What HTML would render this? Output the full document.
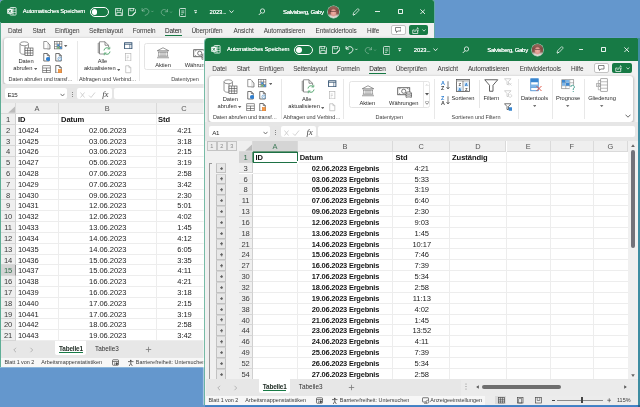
<!DOCTYPE html>
<html lang="de"><head><meta charset="utf-8"><title>Excel</title>
<style>
*{box-sizing:border-box;margin:0;padding:0}
html,body{width:640px;height:407px;overflow:hidden;background:#6497cd;}
body{position:relative;font-family:"Liberation Sans",sans-serif;color:#333;}
.win{will-change:transform;position:absolute;width:434px;height:366.5px;background:#f1f1f1;overflow:hidden;border-radius:4px 4px 0 0;box-shadow:-1px 0 0 0 rgba(95,175,150,.85),-2px 0 1px 0 rgba(255,255,255,.5),2.500px 0 0 0 #3f8da2,0 3px 0 0 #3f7fc4,2.500px 3px 0 0 #2c5f8c;}
.abs{position:absolute}
.title{position:absolute;left:0;top:0;width:100%;height:22.5px;background:#177a45;color:#fff;}
.t{position:absolute;white-space:nowrap;line-height:1;}
.tt{font-size:6.2px;color:#fff;text-shadow:0 0 .25px rgba(255,255,255,.9);}
.tab{font-size:6.45px;letter-spacing:-.12px;color:#383838;top:27.7px;}
.rib{position:absolute;left:3.6px;top:38.2px;width:426.8px;height:45.6px;background:#fff;border-radius:3px;box-shadow:0 1px 2.5px .5px rgba(0,0,0,.2);}
.rl{font-size:5.75px;letter-spacing:-.05px;color:#2c2c2c;text-align:center;}
.gl{font-size:5.5px;color:#3a3a3a;}
.fb{position:absolute;top:88.2px;height:11.2px;background:#fff;border-radius:2px;}
.grid{position:absolute;background:#fff;}
.ch{position:absolute;height:11px;background:#efefef;font-size:7.4px;color:#555;text-align:center;line-height:11.6px;border-right:1px solid #dadada;border-bottom:1px solid #dadada;}
.rh{position:absolute;background:#efefef;font-size:7.6px;letter-spacing:-.2px;color:#3a3a3a;text-align:center;line-height:11.6px;height:10.81px;border-bottom:1px solid #d6d6d6;border-right:1px solid #d0d0d0;}
.c{position:absolute;font-size:7.55px;letter-spacing:-.04px;color:#1c1c1c;line-height:12.3px;height:10.81px;white-space:nowrap;}
.cc{text-align:center}
.b{font-weight:bold;color:#151515}
.hl{position:absolute;height:1px;background:#ededed;}
.vl{position:absolute;width:1px;background:#ededed;}
.pb{width:9.6px;background:#e7e7e7;border:1px solid #c2c2c2;border-top-color:#d4d4d4}
.pb svg{position:absolute;left:2.300px;top:2.900px}
.bb{font-size:7.45px;letter-spacing:-.2px}
.st{font-size:5.45px;color:#3a3a3a;top:359.6px;}
.sheet{font-size:6.4px;color:#333;top:346.3px}
</style></head><body>
<div class="win" id="w1" style="left:0;top:0;border-radius:4px 2px 0 0;box-shadow:0 1px 0 0 rgba(150,190,220,.8),1px 0 0 0 rgba(95,175,150,.7)">
<div class="title"><svg class="abs" style="left:7.2px;top:7.3px" width="9.6" height="8.6" viewBox="0 0 19 17"><rect x="6" y="1" width="12" height="15" rx="1.500" fill="none" stroke="#fff" stroke-width="1.500"/><path d="M6 6h12M6 11h12M12 1v15" stroke="#fff" stroke-width="1.200"/><rect x=".500" y="3.500" width="10.500" height="10" rx="1.200" fill="#fff"/><path d="M3.300 5.800l4.800 5.600M8.100 5.800l-4.800 5.600" stroke="#177a45" stroke-width="1.600"/></svg><div class="t tt" style="left:22.8px;top:9.1px;font-size:5.850px;letter-spacing:-.17px">Automatisches Speichern</div><div class="abs" style="left:89.5px;top:7px;width:19.500px;height:9.5px;border:1px solid #fff;border-radius:5px"></div><div class="abs" style="left:91.8px;top:9px;width:5.500px;height:5.500px;border-radius:3px;background:#fff"></div><svg class="abs" style="left:114.5px;top:7.8px" width="8" height="8" viewBox="0 0 16 16"><path d="M1 1h11.500l2.500 2.500v11.500h-14z" fill="none" stroke="#fff" stroke-width="1.400"/><path d="M4 1v4.500h7v-4.500M3.500 15v-6h9v6" fill="none" stroke="#fff" stroke-width="1.300"/></svg><svg class="abs" style="left:128px;top:7.8px" width="8.5" height="8" viewBox="0 0 17 16"><path d="M8 15h-7v-14h11.500l2.500 2.500v4" fill="none" stroke="#fff" stroke-width="1.400"/><path d="M4 1v4.500h7v-4.500" fill="none" stroke="#fff" stroke-width="1.300"/><path d="M14.500 7l-6 6.500-1 2.500 2.600-.800 6-6.500z" fill="#fff"/></svg><svg class="abs" style="left:141.2px;top:6.9px" width="13" height="9.2" viewBox="0 0 24 17"><path d="M2 2v5.500h5.500" fill="none" stroke="rgba(255,255,255,.38)" stroke-width="1.700"/><path d="M2.500 7.300c2-3.500 5-4.800 8-4 3.500 1 5 4.500 3.500 7.500-1 2.200-3.500 3.700-7 5" fill="none" stroke="rgba(255,255,255,.38)" stroke-width="1.700"/><path d="M19 7l2 2.300 2-2.300" fill="none" stroke="rgba(255,255,255,.38)" stroke-width="1.200"/></svg><svg class="abs" style="left:160px;top:7.5px" width="13" height="8.5" viewBox="0 0 26 17"><path d="M15 2v5.500h-5.500" fill="none" stroke="rgba(255,255,255,.38)" stroke-width="1.700"/><path d="M14.500 7.300c-2-3.500-5-4.800-8-4-3.500 1-5 4.500-3.500 7.500 1 2.200 3.500 3.700 7 5" fill="none" stroke="rgba(255,255,255,.38)" stroke-width="1.700"/><path d="M20 7l2 2.300 2-2.300" fill="none" stroke="rgba(255,255,255,.38)" stroke-width="1.200"/></svg><svg class="abs" style="left:178.5px;top:7.5px" width="7.5" height="9" viewBox="0 0 15 18"><rect x="1" y="1" width="13" height="16" rx="2" fill="none" stroke="#fff" stroke-width="1.500"/><path d="M4.500 6h6M4.500 9.500h6M4.500 13h3" stroke="#fff" stroke-width="1.300"/></svg><svg class="abs" style="left:194px;top:10.2px" width="3.4" height="3.8" viewBox="0 0 8 9"><path d="M0 1h8" stroke="#fff" stroke-width="1.700"/><path d="M.500 4h7l-3.500 4.500z" fill="#fff"/></svg><div class="t tt" style="left:209.6px;top:9.6px;font-size:5.900px;letter-spacing:-.1px">2023<span style="letter-spacing:-.45px">...</span></div><svg class="abs" style="left:229.2px;top:10.3px" width="5" height="3.5" viewBox="0 0 10 7"><path d="M1 1l4 4.500 4-4.500" fill="none" stroke="#fff" stroke-width="1.700"/></svg><svg class="abs" style="left:257.5px;top:8.2px" width="7.5" height="7.5" viewBox="0 0 15 15"><circle cx="9" cy="6" r="4.300" fill="none" stroke="#fff" stroke-width="1.500"/><path d="M6 9.500l-4.500 4.500" stroke="#fff" stroke-width="1.700"/></svg><div class="t tt" style="left:283px;top:9.2px;font-size:6.100px;letter-spacing:-.36px;text-shadow:0 0 .2px #fff">Salvisberg, Gaby</div><div class="abs" style="left:327.6px;top:6.300px;width:11.400px;height:11.400px;border-radius:6px;overflow:hidden;background:radial-gradient(ellipse 30% 36% at 50% 56%,#eeb0a6 0,#e09a90 65%,rgba(224,154,144,0) 100%),linear-gradient(#9a6a5c 0,#7f4a42 40%,#8a564c 62%,#d9d2cc 84%,#e6e2de 100%);box-shadow:0 0 0 .600px rgba(235,240,235,.85)"><div class="abs" style="left:2.800px;top:4.700px;width:5.800px;height:1px;background:rgba(70,40,40,.55)"></div></div><svg class="abs" style="left:351.8px;top:8px" width="8" height="8" viewBox="0 0 16 16"><path d="M11 1.500c1.500-.500 3.500 1.500 3 3l-7.500 8-4.500 1.500 1.200-4.500z" fill="none" stroke="#fff" stroke-width="1.400" stroke-linejoin="round"/><path d="M3 15l3-3" stroke="#fff" stroke-width="1.200"/></svg><div class="abs" style="left:375.3px;top:11.4px;width:4.400px;height:.8px;background:rgba(255,255,255,.85)"></div><div class="abs" style="left:397.6px;top:9.2px;width:5.200px;height:5.200px;border:.6px solid rgba(255,255,255,.9);border-radius:.8px"></div><svg class="abs" style="left:420.1px;top:9.2px" width="5.400" height="5.400" viewBox="0 0 6 6"><path d="M.400 .400l5.200 5.200M5.600 .400L.400 5.600" stroke="#fff" stroke-width=".95"/></svg></div>
<div class="abs" style="left:0;top:22px;width:1.200px;height:345px;background:#5fae96;z-index:5"></div>
<div class="t tab" style="left:8px">Datei</div><div class="t tab" style="left:32.5px">Start</div><div class="t tab" style="left:55px">Einfügen</div><div class="t tab" style="left:89px">Seitenlayout</div><div class="t tab" style="left:132.8px">Formeln</div><div class="t tab" style="left:165px;color:#1a1a1a">Daten</div><div class="t tab" style="left:191.5px">Überprüfen</div><div class="t tab" style="left:233.4px">Ansicht</div><div class="t tab" style="left:263.7px">Automatisieren</div><div class="t tab" style="left:315.5px">Entwicklertools</div><div class="t tab" style="left:366.9px">Hilfe</div><div class="abs" style="left:165px;top:34.700px;width:17px;height:1.3px;background:#177a45"></div><div class="abs" style="left:390.5px;top:25px;width:15.200px;height:10.300px;background:#fff;border:.8px solid #c4c4c4;border-radius:2px"></div><svg class="abs" style="left:394.9px;top:27.3px" width="6.500" height="6" viewBox="0 0 13 12"><path d="M1 1h11v7h-6.500l-2.500 3v-3h-2z" fill="none" stroke="#444" stroke-width="1.300" stroke-linejoin="round"/></svg><div class="abs" style="left:408.5px;top:25px;width:19.800px;height:10.300px;background:#177a45;border-radius:2px"></div><svg class="abs" style="left:411.5px;top:26.8px" width="7" height="7" viewBox="0 0 14 14"><path d="M5 6h-3.500v7h10v-5" fill="none" stroke="#fff" stroke-width="1.400"/><path d="M5.500 9.500c.500-3.500 2.500-5.500 5.500-5.500v-3l3 4-3 4v-2.800c-2.500 0-4 1-5.500 3.300z" fill="none" stroke="#fff" stroke-width="1.100" stroke-linejoin="round"/></svg><svg class="abs" style="left:422.2px;top:29.3px" width="4" height="2.800" viewBox="0 0 8 5.600"><path d="M1 1l3 3.300 3-3.300" fill="none" stroke="#fff" stroke-width="1.400"/></svg>
<div class="rib"></div>
<div class="abs" style="left:0px;top:0;width:0;height:0"><svg class="abs" style="left:19px;top:41px" width="15" height="15.5" viewBox="0 0 30 31"><path d="M2 5.5v17c0 2.5 4 4.2 8.5 4.2h1.500V5.500" fill="#fff" stroke="#585858" stroke-width="1.25"/><path d="M19 5.5v8" stroke="#585858" stroke-width="1.25"/><ellipse cx="10.500" cy="5.500" rx="8.500" ry="4" fill="#fff" stroke="#585858" stroke-width="1.25"/><rect x="12" y="14" width="16" height="15" fill="#fff" stroke="#505050" stroke-width="1.35"/><path d="M12 19h16M12 24h16M17.3 14v15M22.600 14v15" stroke="#505050" stroke-width="1.3"/></svg><div class="t rl" style="left:-14px;width:80px;top:58.8px;">Daten</div><div class="t rl" style="left:-17.2px;width:80px;top:65.9px;">abrufen</div><svg class="abs" style="left:34.099999999999994px;top:68.1px" width="3.400" height="2.200" viewBox="0 0 3.400 2.200"><path d="M0 0h3.400L1.700 2.200z" fill="#666"/></svg><svg class="abs" style="left:42.5px;top:41px" width="8" height="8.5" viewBox="0 0 16 17"><path d="M1.500 1h6l3 3v11.500h-9z" fill="#fff" stroke="#585858" stroke-width="1.2"/><path d="M10 4.500l4 3.500v8h-5" fill="#e8e8e8" stroke="#585858" stroke-width="1.3"/></svg><svg class="abs" style="left:42.5px;top:53px" width="7" height="8.5" viewBox="0 0 14 17"><path d="M1.5 1h7l4 4v11h-11z" fill="#fff" stroke="#4a4a4a" stroke-width="1.5"/><path d="M8.5 1v4h4" fill="none" stroke="#4a4a4a" stroke-width="1.3"/><circle cx="10" cy="12" r="4.200" fill="#2f7fd0"/></svg><svg class="abs" style="left:42px;top:64.5px" width="9" height="8.5" viewBox="0 0 18 17"><rect x="1.500" y="1.500" width="15" height="14" fill="#fff" stroke="#555" stroke-width="1.250"/><path d="M1.500 6h15M9 6v9.500M1.500 11h15" stroke="#555" stroke-width="1.300"/></svg><svg class="abs" style="left:54px;top:41px" width="8.5" height="8.5" viewBox="0 0 17 17"><rect x="1.200" y="1.200" width="14.600" height="14.600" fill="#fff" stroke="#555" stroke-width="1.250"/><path d="M1.200 6h14.600M1.200 11h14.600M6 1.200v14.600M11 1.200v14.600" stroke="#555" stroke-width="1.100"/><rect x="6.500" y="6.500" width="4" height="4" fill="#3a86d0"/><rect x="11.5" y="11.500" width="4" height="4" fill="#3a86d0"/><rect x="6.500" y="11.500" width="4" height="4" fill="#6db36d"/></svg><svg class="abs" style="left:64.3px;top:44.5px" width="3.400" height="2.200" viewBox="0 0 3.400 2.200"><path d="M0 0h3.400L1.700 2.200z" fill="#666"/></svg><svg class="abs" style="left:54.5px;top:53px" width="7" height="8.5" viewBox="0 0 14 17"><path d="M1.5 1h7l4 4v11h-11z" fill="#fff" stroke="#4a4a4a" stroke-width="1.5"/><path d="M8.5 1v4h4" fill="none" stroke="#4a4a4a" stroke-width="1.3"/><circle cx="9.500" cy="11.500" r="3.600" fill="#fff" stroke="#4a8ac0" stroke-width="1.300"/><path d="M9.500 9.500v2.200h1.800" stroke="#4a8ac0" stroke-width="1" fill="none"/></svg><svg class="abs" style="left:54.5px;top:64.5px" width="7" height="8.5" viewBox="0 0 14 17"><path d="M1.5 1h7l4 4v11h-11z" fill="#fff" stroke="#4a4a4a" stroke-width="1.5"/><path d="M8.5 1v4h4" fill="none" stroke="#4a4a4a" stroke-width="1.3"/><rect x="6.500" y="9" width="6.500" height="7" fill="#f2994a" stroke="#e07a20" stroke-width="1"/></svg><div class="t gl" style="left:8.6px;top:77.1px;letter-spacing:-.09px">Daten abrufen und transf…</div><div class="abs" style="left:76.5px;top:41px;width:1px;height:40px;background:#e8e8e8"></div><svg class="abs" style="left:96.5px;top:41px" width="14.5" height="15" viewBox="0 0 29 30"><path d="M2 4h3v20h-3z" fill="#bbb" stroke="#8a8a8a" stroke-width="1"/><path d="M5 1.500h11l7 7v17.500h-18z" fill="#fff" stroke="#585858" stroke-width="1.250"/><path d="M16 1.500v7h7" fill="none" stroke="#585858" stroke-width="1.300"/><circle cx="20" cy="20" r="7.500" fill="#fff"/><path d="M14 19a6 6 0 0 1 10.500-3.500M26 21a6 6 0 0 1-10.500 3.500" fill="none" stroke="#4ca56a" stroke-width="1.800"/><path d="M25.500 11.500v4.500h-4.500M14.500 28.500v-4.500h4.500" fill="none" stroke="#4ca56a" stroke-width="1.600"/></svg><div class="t rl" style="left:62.5px;width:80px;top:59.1px;">Alle</div><div class="t rl" style="left:59.8px;width:80px;top:66.4px;">aktualisieren</div><svg class="abs" style="left:116.6px;top:68.6px" width="3.400" height="2.200" viewBox="0 0 3.400 2.200"><path d="M0 0h3.400L1.700 2.200z" fill="#666"/></svg><svg class="abs" style="left:124px;top:41.5px" width="8.5" height="7.5" viewBox="0 0 17 15"><rect x="1.200" y="1.500" width="14.600" height="12" fill="#fff" stroke="#2f4f6f" stroke-width="1.800"/><path d="M1.200 4.500h14.600" stroke="#2f4f6f" stroke-width="1.600"/><path d="M11.500 4.500v9" stroke="#2f4f6f" stroke-width="1.200"/></svg><svg class="abs" style="left:125px;top:52.5px" width="6.5" height="8.5" viewBox="0 0 13 17"><rect x="1.200" y="1.200" width="10.600" height="14.600" fill="#fff" stroke="#b0b0b0" stroke-width="1.250"/><path d="M3.500 6h4M3.500 9h4M3.500 12h2" stroke="#b8b8b8" stroke-width="1.200"/></svg><svg class="abs" style="left:125px;top:65px" width="6.5" height="8.5" viewBox="0 0 14 17"><path d="M1.5 1h7l4 4v11h-11z" fill="#fff" stroke="#b4b4b4" stroke-width="1.5"/><path d="M8.5 1v4h4" fill="none" stroke="#b4b4b4" stroke-width="1.3"/></svg><div class="t gl" style="left:79px;top:77.1px;letter-spacing:-.06px">Abfragen und Verbind…</div><div class="abs" style="left:138.7px;top:41px;width:1px;height:40px;background:#e8e8e8"></div></div><div class="abs" style="left:0.7px;top:0;width:0;height:0"><div class="abs" style="left:143.500px;top:42.500px;width:100px;height:27.500px;border:1px solid #e4e4e4;border-radius:2.500px;background:#fff"></div><svg class="abs" style="left:155.5px;top:47px" width="14" height="11.5" viewBox="0 0 28 23"><path d="M14 1.500L2.500 7.500h23z" fill="#fff" stroke="#505050" stroke-width="1.150" stroke-linejoin="round"/><path d="M5.500 10v8M10 10v8M14 10v8M18 10v8M22.500 10v8" stroke="#505050" stroke-width="1.150"/><path d="M3.500 18.500h21M2 21.500h24M4 10h20" stroke="#505050" stroke-width="1.150"/></svg><div class="t rl" style="left:122.30000000000001px;width:80px;top:62.7px;">Aktien</div><svg class="abs" style="left:192px;top:48.5px" width="15" height="11.5" viewBox="0 0 30 23"><rect x="1.500" y="1.500" width="24" height="14" fill="#fff" stroke="#444" stroke-width="1.600"/><circle cx="13.500" cy="8.500" r="4.200" fill="#fff" stroke="#444" stroke-width="1.400"/><path d="M4 4.500a3 3 0 0 0 2.500-2.500M4 12.500a3 3 0 0 1 2.500 2.500M23 4.500a3 3 0 0 1-2.500-2.500" fill="none" stroke="#444" stroke-width="1"/><path d="M18 12v8c0 1.500 2.500 2.500 5.500 2.500s5.500-1 5.500-2.500v-8" fill="#e6e6e6" stroke="#444" stroke-width="1.300"/><ellipse cx="23.500" cy="12" rx="5.500" ry="2.300" fill="#f4f4f4" stroke="#444" stroke-width="1.300"/><path d="M18 16c0 1.500 2.500 2.300 5.500 2.300s5.500-.800 5.500-2.300" fill="none" stroke="#444" stroke-width="1.100"/></svg><div class="t rl" style="left:158.7px;width:80px;top:62.7px;">Währungen</div><div class="t rl" style="left:144.3px;width:80px;top:77.1px;font-size:5.500px;color:#444">Datentypen</div></div>
<div class="abs" style="left:0;top:83.8px;width:100%;height:19.5px;background:#e6e6e6"></div><div class="fb" style="left:4.6px;width:62px"></div>
<div class="t" style="left:7.6px;top:91.6px;font-size:6.2px;letter-spacing:-.42px;color:#2a2a2a">E15</div>
<svg class="abs" style="left:59.599999999999994px;top:92.5px" width="5" height="4" viewBox="0 0 5 4"><path d="M0.5 0.8L2.5 3 4.5 0.8" fill="none" stroke="#555" stroke-width=".8"/></svg>
<div class="abs" style="left:71.6px;top:91.5px;width:1px;height:5px;border-left:1px dotted #888"></div>
<div class="fb" style="left:76.6px;width:35px"></div>
<svg class="abs" style="left:78.6px;top:90.5px" width="30" height="8" viewBox="0 0 30 8"><path d="M1.5 1.5l4 5M5.5 1.5l-4 5" stroke="#c8c8c8" stroke-width=".8" fill="none"/><path d="M10 4.5l2 2 4-5" stroke="#c8c8c8" stroke-width=".8" fill="none"/></svg>
<div class="t" style="left:102.19999999999999px;top:89.6px;font-size:9px;font-family:'Liberation Serif',serif;font-style:italic;color:#444;letter-spacing:-.3px">fx</div>
<div class="fb" style="left:114px;width:317px"></div>
<div class="grid" style="left:1px;top:103px;width:433px;height:238px"></div><div class="ch" style="left:1px;top:103px;width:15px;height:11px"></div><svg class="abs" style="left:7.699999999999999px;top:105.8px" width="7.5" height="7" viewBox="0 0 7.5 7"><path d="M7.2 0.3v6.400h-7z" fill="#bcbcbc"/></svg><div class="ch" style="left:16px;top:103px;width:43px">A</div><div class="vl" style="left:58px;top:114px;height:227px"></div><div class="ch" style="left:59px;top:103px;width:97.5px">B</div><div class="vl" style="left:155.5px;top:114px;height:227px"></div><div class="ch" style="left:156.5px;top:103px;width:56.0px">C</div><div class="vl" style="left:211.5px;top:114px;height:227px"></div><div class="ch" style="left:212.5px;top:103px;width:56.5px">D</div><div class="vl" style="left:268px;top:114px;height:227px"></div><div class="rh" style="left:1px;top:114.00px;width:15px">1</div><div class="hl" style="left:16px;top:123.81px;width:418px"></div><div class="c b" style="left:18px;top:114.00px">ID</div><div class="c b" style="left:61px;top:114.00px">Datum</div><div class="c b" style="left:158px;top:114.00px">Std</div><div class="rh" style="left:1px;top:124.81px;width:15px">2</div><div class="hl" style="left:16px;top:134.62px;width:418px"></div><div class="c" style="left:17.9px;top:124.81px">10424</div><div class="c cc" style="left:59px;width:97.5px;top:124.81px">02.06.2023</div><div class="c cc" style="left:156.5px;width:56px;top:124.81px">4:21</div><div class="rh" style="left:1px;top:135.62px;width:15px">3</div><div class="hl" style="left:16px;top:145.43px;width:418px"></div><div class="c" style="left:17.9px;top:135.62px">10425</div><div class="c cc" style="left:59px;width:97.5px;top:135.62px">03.06.2023</div><div class="c cc" style="left:156.5px;width:56px;top:135.62px">3:18</div><div class="rh" style="left:1px;top:146.43px;width:15px">4</div><div class="hl" style="left:16px;top:156.24px;width:418px"></div><div class="c" style="left:17.9px;top:146.43px">10426</div><div class="c cc" style="left:59px;width:97.5px;top:146.43px">03.06.2023</div><div class="c cc" style="left:156.5px;width:56px;top:146.43px">2:15</div><div class="rh" style="left:1px;top:157.24px;width:15px">5</div><div class="hl" style="left:16px;top:167.05px;width:418px"></div><div class="c" style="left:17.9px;top:157.24px">10427</div><div class="c cc" style="left:59px;width:97.5px;top:157.24px">05.06.2023</div><div class="c cc" style="left:156.5px;width:56px;top:157.24px">3:19</div><div class="rh" style="left:1px;top:168.05px;width:15px">6</div><div class="hl" style="left:16px;top:177.86px;width:418px"></div><div class="c" style="left:17.9px;top:168.05px">10428</div><div class="c cc" style="left:59px;width:97.5px;top:168.05px">07.06.2023</div><div class="c cc" style="left:156.5px;width:56px;top:168.05px">2:58</div><div class="rh" style="left:1px;top:178.86px;width:15px">7</div><div class="hl" style="left:16px;top:188.67px;width:418px"></div><div class="c" style="left:17.9px;top:178.86px">10429</div><div class="c cc" style="left:59px;width:97.5px;top:178.86px">07.06.2023</div><div class="c cc" style="left:156.5px;width:56px;top:178.86px">3:42</div><div class="rh" style="left:1px;top:189.67px;width:15px">8</div><div class="hl" style="left:16px;top:199.48px;width:418px"></div><div class="c" style="left:17.9px;top:189.67px">10430</div><div class="c cc" style="left:59px;width:97.5px;top:189.67px">09.06.2023</div><div class="c cc" style="left:156.5px;width:56px;top:189.67px">2:30</div><div class="rh" style="left:1px;top:200.48px;width:15px">9</div><div class="hl" style="left:16px;top:210.29px;width:418px"></div><div class="c" style="left:17.9px;top:200.48px">10431</div><div class="c cc" style="left:59px;width:97.5px;top:200.48px">12.06.2023</div><div class="c cc" style="left:156.5px;width:56px;top:200.48px">5:01</div><div class="rh" style="left:1px;top:211.29px;width:15px">10</div><div class="hl" style="left:16px;top:221.10px;width:418px"></div><div class="c" style="left:17.9px;top:211.29px">10432</div><div class="c cc" style="left:59px;width:97.5px;top:211.29px">12.06.2023</div><div class="c cc" style="left:156.5px;width:56px;top:211.29px">4:02</div><div class="rh" style="left:1px;top:222.10px;width:15px">11</div><div class="hl" style="left:16px;top:231.91px;width:418px"></div><div class="c" style="left:17.9px;top:222.10px">10433</div><div class="c cc" style="left:59px;width:97.5px;top:222.10px">13.06.2023</div><div class="c cc" style="left:156.5px;width:56px;top:222.10px">1:45</div><div class="rh" style="left:1px;top:232.91px;width:15px">12</div><div class="hl" style="left:16px;top:242.72px;width:418px"></div><div class="c" style="left:17.9px;top:232.91px">10434</div><div class="c cc" style="left:59px;width:97.5px;top:232.91px">14.06.2023</div><div class="c cc" style="left:156.5px;width:56px;top:232.91px">4:12</div><div class="rh" style="left:1px;top:243.72px;width:15px">13</div><div class="hl" style="left:16px;top:253.53px;width:418px"></div><div class="c" style="left:17.9px;top:243.72px">10435</div><div class="c cc" style="left:59px;width:97.5px;top:243.72px">14.06.2023</div><div class="c cc" style="left:156.5px;width:56px;top:243.72px">6:05</div><div class="rh" style="left:1px;top:254.53px;width:15px">14</div><div class="hl" style="left:16px;top:264.34px;width:418px"></div><div class="c" style="left:17.9px;top:254.53px">10436</div><div class="c cc" style="left:59px;width:97.5px;top:254.53px">15.06.2023</div><div class="c cc" style="left:156.5px;width:56px;top:254.53px">3:35</div><div class="rh" style="left:1px;top:265.34px;width:15px;background:#d4d4d4;color:#2f6d4a;border-right:1.2px solid #8c8c8c">15</div><div class="hl" style="left:16px;top:275.15px;width:418px"></div><div class="c" style="left:17.9px;top:265.34px">10437</div><div class="c cc" style="left:59px;width:97.5px;top:265.34px">15.06.2023</div><div class="c cc" style="left:156.5px;width:56px;top:265.34px">4:11</div><div class="rh" style="left:1px;top:276.15px;width:15px">16</div><div class="hl" style="left:16px;top:285.96px;width:418px"></div><div class="c" style="left:17.9px;top:276.15px">10438</div><div class="c cc" style="left:59px;width:97.5px;top:276.15px">16.06.2023</div><div class="c cc" style="left:156.5px;width:56px;top:276.15px">4:21</div><div class="rh" style="left:1px;top:286.96px;width:15px">17</div><div class="hl" style="left:16px;top:296.77px;width:418px"></div><div class="c" style="left:17.9px;top:286.96px">10439</div><div class="c cc" style="left:59px;width:97.5px;top:286.96px">16.06.2023</div><div class="c cc" style="left:156.5px;width:56px;top:286.96px">3:18</div><div class="rh" style="left:1px;top:297.77px;width:15px">18</div><div class="hl" style="left:16px;top:307.58px;width:418px"></div><div class="c" style="left:17.9px;top:297.77px">10440</div><div class="c cc" style="left:59px;width:97.5px;top:297.77px">17.06.2023</div><div class="c cc" style="left:156.5px;width:56px;top:297.77px">2:15</div><div class="rh" style="left:1px;top:308.58px;width:15px">19</div><div class="hl" style="left:16px;top:318.39px;width:418px"></div><div class="c" style="left:17.9px;top:308.58px">10441</div><div class="c cc" style="left:59px;width:97.5px;top:308.58px">17.06.2023</div><div class="c cc" style="left:156.5px;width:56px;top:308.58px">3:19</div><div class="rh" style="left:1px;top:319.39px;width:15px">20</div><div class="hl" style="left:16px;top:329.20px;width:418px"></div><div class="c" style="left:17.9px;top:319.39px">10442</div><div class="c cc" style="left:59px;width:97.5px;top:319.39px">18.06.2023</div><div class="c cc" style="left:156.5px;width:56px;top:319.39px">2:58</div><div class="rh" style="left:1px;top:330.20px;width:15px">21</div><div class="hl" style="left:16px;top:340.01px;width:418px"></div><div class="c" style="left:17.9px;top:330.20px">10443</div><div class="c cc" style="left:59px;width:97.5px;top:330.20px">19.06.2023</div><div class="c cc" style="left:156.5px;width:56px;top:330.20px">3:42</div>
<div class="abs" style="left:1px;top:341px;width:433px;height:16.5px;background:#e7e7e7"></div><svg class="abs" style="left:13px;top:346.5px" width="22" height="6" viewBox="0 0 22 6"><path d="M3 .8L.8 3 3 5.2M17.5 .8L19.7 3 17.5 5.2" fill="none" stroke="#a8a8a8" stroke-width=".8"/></svg><div class="abs" style="left:55px;top:341px;width:31px;height:14px;background:#fff;border-radius:0 0 2px 2px"></div><div class="t sheet b" style="left:59px;color:#1d2a22;font-size:6.4px;letter-spacing:-.16px">Tabelle1</div><div class="abs" style="left:59px;top:352.2px;width:23.5px;height:1.1px;background:#177a45"></div><div class="t sheet" style="left:95px">Tabelle3</div><svg class="abs" style="left:144.5px;top:346px" width="7" height="7" viewBox="0 0 7 7"><path d="M3.5 .8v5.400M.8 3.5h5.400" stroke="#7a7a7a" stroke-width=".8"/></svg>
<div class="abs" style="left:1px;top:357.5px;width:433px;height:9px;background:#f7f7f7"></div><div class="t st" style="left:4.5px;letter-spacing:-.04px">Blatt 1 von 2</div><div class="t st" style="left:41.2px">Arbeitsmappenstatistiken</div><svg class="abs" style="left:112px;top:358.8px" width="7" height="7" viewBox="0 0 14 14"><rect x="1" y="1.5" width="12" height="11" rx="1.5" fill="none" stroke="#444" stroke-width="1.4"/><path d="M1 5h12M4 8h2M8 8h2M4 10.5h2" stroke="#444" stroke-width="1.3"/><circle cx="9.5" cy="9.5" r="2.4" fill="#444"/></svg><svg class="abs" style="left:127px;top:358.6px" width="7.5" height="7.5" viewBox="0 0 15 15"><circle cx="7.5" cy="3" r="1.6" fill="#444"/><path d="M2 5.2h11M7.5 5.2v4M7.5 9l-3.2 5M7.5 9l3.2 5" stroke="#444" stroke-width="1.5" fill="none"/></svg><div class="t st" style="left:135.8px">Barrierefreiheit: Untersuchen</div>
</div>
<div class="win" id="w2" style="left:205px;top:37.6px;width:432.8px;border-radius:4px 1px 0 0">
<div class="title"><svg class="abs" style="left:6.4px;top:7.3px" width="9.6" height="8.6" viewBox="0 0 19 17"><rect x="6" y="1" width="12" height="15" rx="1.500" fill="none" stroke="#fff" stroke-width="1.500"/><path d="M6 6h12M6 11h12M12 1v15" stroke="#fff" stroke-width="1.200"/><rect x=".500" y="3.500" width="10.500" height="10" rx="1.200" fill="#fff"/><path d="M3.300 5.800l4.800 5.600M8.100 5.800l-4.800 5.600" stroke="#177a45" stroke-width="1.600"/></svg><div class="t tt" style="left:22.0px;top:9.1px;font-size:5.850px;letter-spacing:-.17px">Automatisches Speichern</div><div class="abs" style="left:88.7px;top:7px;width:19.500px;height:9.5px;border:1px solid #fff;border-radius:5px"></div><div class="abs" style="left:91.0px;top:9px;width:5.500px;height:5.500px;border-radius:3px;background:#fff"></div><svg class="abs" style="left:113.7px;top:7.8px" width="8" height="8" viewBox="0 0 16 16"><path d="M1 1h11.500l2.500 2.500v11.500h-14z" fill="none" stroke="#fff" stroke-width="1.400"/><path d="M4 1v4.500h7v-4.500M3.500 15v-6h9v6" fill="none" stroke="#fff" stroke-width="1.300"/></svg><svg class="abs" style="left:127.2px;top:7.8px" width="8.5" height="8" viewBox="0 0 17 16"><path d="M8 15h-7v-14h11.500l2.500 2.500v4" fill="none" stroke="#fff" stroke-width="1.400"/><path d="M4 1v4.500h7v-4.500" fill="none" stroke="#fff" stroke-width="1.300"/><path d="M14.500 7l-6 6.500-1 2.500 2.600-.800 6-6.500z" fill="#fff"/></svg><svg class="abs" style="left:140.39999999999998px;top:6.9px" width="13" height="9.2" viewBox="0 0 24 17"><path d="M2 2v5.500h5.500" fill="none" stroke="#fff" stroke-width="1.700"/><path d="M2.500 7.300c2-3.500 5-4.800 8-4 3.500 1 5 4.500 3.500 7.500-1 2.200-3.500 3.700-7 5" fill="none" stroke="#fff" stroke-width="1.700"/><path d="M19 7l2 2.300 2-2.300" fill="none" stroke="#fff" stroke-width="1.200"/></svg><svg class="abs" style="left:159.2px;top:7.5px" width="13" height="8.5" viewBox="0 0 26 17"><path d="M15 2v5.500h-5.500" fill="none" stroke="rgba(255,255,255,.38)" stroke-width="1.700"/><path d="M14.500 7.300c-2-3.500-5-4.800-8-4-3.500 1-5 4.500-3.500 7.500 1 2.200 3.500 3.700 7 5" fill="none" stroke="rgba(255,255,255,.38)" stroke-width="1.700"/><path d="M20 7l2 2.300 2-2.300" fill="none" stroke="rgba(255,255,255,.38)" stroke-width="1.200"/></svg><svg class="abs" style="left:177.7px;top:7.5px" width="7.5" height="9" viewBox="0 0 15 18"><rect x="1" y="1" width="13" height="16" rx="2" fill="none" stroke="#fff" stroke-width="1.500"/><path d="M4.500 6h6M4.500 9.500h6M4.500 13h3" stroke="#fff" stroke-width="1.300"/></svg><svg class="abs" style="left:193.2px;top:10.2px" width="3.4" height="3.8" viewBox="0 0 8 9"><path d="M0 1h8" stroke="#fff" stroke-width="1.700"/><path d="M.500 4h7l-3.500 4.500z" fill="#fff"/></svg><div class="t tt" style="left:208.79999999999998px;top:9.6px;font-size:5.900px;letter-spacing:-.1px">2023<span style="letter-spacing:-.45px">...</span></div><svg class="abs" style="left:228.39999999999998px;top:10.3px" width="5" height="3.5" viewBox="0 0 10 7"><path d="M1 1l4 4.500 4-4.500" fill="none" stroke="#fff" stroke-width="1.700"/></svg><svg class="abs" style="left:256.7px;top:8.2px" width="7.5" height="7.5" viewBox="0 0 15 15"><circle cx="9" cy="6" r="4.300" fill="none" stroke="#fff" stroke-width="1.500"/><path d="M6 9.500l-4.500 4.500" stroke="#fff" stroke-width="1.700"/></svg><div class="t tt" style="left:282.2px;top:9.2px;font-size:6.100px;letter-spacing:-.36px;text-shadow:0 0 .2px #fff">Salvisberg, Gaby</div><div class="abs" style="left:326.8px;top:6.300px;width:11.400px;height:11.400px;border-radius:6px;overflow:hidden;background:radial-gradient(ellipse 30% 36% at 50% 56%,#eeb0a6 0,#e09a90 65%,rgba(224,154,144,0) 100%),linear-gradient(#9a6a5c 0,#7f4a42 40%,#8a564c 62%,#d9d2cc 84%,#e6e2de 100%);box-shadow:0 0 0 .600px rgba(235,240,235,.85)"><div class="abs" style="left:2.800px;top:4.700px;width:5.800px;height:1px;background:rgba(70,40,40,.55)"></div></div><svg class="abs" style="left:351.0px;top:8px" width="8" height="8" viewBox="0 0 16 16"><path d="M11 1.500c1.500-.500 3.500 1.500 3 3l-7.500 8-4.500 1.500 1.200-4.500z" fill="none" stroke="#fff" stroke-width="1.400" stroke-linejoin="round"/><path d="M3 15l3-3" stroke="#fff" stroke-width="1.200"/></svg><div class="abs" style="left:373.8px;top:11.4px;width:4.400px;height:.8px;background:rgba(255,255,255,.85)"></div><div class="abs" style="left:396.1px;top:9.2px;width:5.200px;height:5.200px;border:.6px solid rgba(255,255,255,.9);border-radius:.8px"></div><svg class="abs" style="left:418.6px;top:9.2px" width="5.400" height="5.400" viewBox="0 0 6 6"><path d="M.400 .400l5.200 5.200M5.600 .400L.400 5.600" stroke="#fff" stroke-width=".95"/></svg></div>
<div class="t tab" style="left:7.2px">Datei</div><div class="t tab" style="left:31.7px">Start</div><div class="t tab" style="left:54.2px">Einfügen</div><div class="t tab" style="left:88.2px">Seitenlayout</div><div class="t tab" style="left:132.0px">Formeln</div><div class="t tab" style="left:164.2px;color:#1a1a1a">Daten</div><div class="t tab" style="left:190.7px">Überprüfen</div><div class="t tab" style="left:232.6px">Ansicht</div><div class="t tab" style="left:262.9px">Automatisieren</div><div class="t tab" style="left:314.7px">Entwicklertools</div><div class="t tab" style="left:366.09999999999997px">Hilfe</div><div class="abs" style="left:164.2px;top:34.700px;width:17px;height:1.3px;background:#177a45"></div><div class="abs" style="left:389.0px;top:25px;width:15.200px;height:10.300px;background:#fff;border:.8px solid #c4c4c4;border-radius:2px"></div><svg class="abs" style="left:393.4px;top:27.3px" width="6.500" height="6" viewBox="0 0 13 12"><path d="M1 1h11v7h-6.500l-2.500 3v-3h-2z" fill="none" stroke="#444" stroke-width="1.300" stroke-linejoin="round"/></svg><div class="abs" style="left:407.0px;top:25px;width:19.800px;height:10.300px;background:#177a45;border-radius:2px"></div><svg class="abs" style="left:410.0px;top:26.8px" width="7" height="7" viewBox="0 0 14 14"><path d="M5 6h-3.500v7h10v-5" fill="none" stroke="#fff" stroke-width="1.400"/><path d="M5.500 9.500c.500-3.500 2.500-5.500 5.500-5.500v-3l3 4-3 4v-2.800c-2.500 0-4 1-5.500 3.300z" fill="none" stroke="#fff" stroke-width="1.100" stroke-linejoin="round"/></svg><svg class="abs" style="left:420.7px;top:29.3px" width="4" height="2.800" viewBox="0 0 8 5.600"><path d="M1 1l3 3.300 3-3.300" fill="none" stroke="#fff" stroke-width="1.400"/></svg>
<div class="rib" style="width:424.8px"></div>
<div class="abs" style="left:-0.7px;top:0;width:0;height:0"><svg class="abs" style="left:19px;top:41px" width="15" height="15.5" viewBox="0 0 30 31"><path d="M2 5.5v17c0 2.5 4 4.2 8.5 4.2h1.500V5.500" fill="#fff" stroke="#585858" stroke-width="1.25"/><path d="M19 5.5v8" stroke="#585858" stroke-width="1.25"/><ellipse cx="10.500" cy="5.500" rx="8.500" ry="4" fill="#fff" stroke="#585858" stroke-width="1.25"/><rect x="12" y="14" width="16" height="15" fill="#fff" stroke="#505050" stroke-width="1.35"/><path d="M12 19h16M12 24h16M17.3 14v15M22.600 14v15" stroke="#505050" stroke-width="1.3"/></svg><div class="t rl" style="left:-14px;width:80px;top:58.8px;">Daten</div><div class="t rl" style="left:-17.2px;width:80px;top:65.9px;">abrufen</div><svg class="abs" style="left:34.099999999999994px;top:68.1px" width="3.400" height="2.200" viewBox="0 0 3.400 2.200"><path d="M0 0h3.400L1.700 2.200z" fill="#666"/></svg><svg class="abs" style="left:42.5px;top:41px" width="8" height="8.5" viewBox="0 0 16 17"><path d="M1.500 1h6l3 3v11.500h-9z" fill="#fff" stroke="#585858" stroke-width="1.2"/><path d="M10 4.500l4 3.500v8h-5" fill="#e8e8e8" stroke="#585858" stroke-width="1.3"/></svg><svg class="abs" style="left:42.5px;top:53px" width="7" height="8.5" viewBox="0 0 14 17"><path d="M1.5 1h7l4 4v11h-11z" fill="#fff" stroke="#4a4a4a" stroke-width="1.5"/><path d="M8.5 1v4h4" fill="none" stroke="#4a4a4a" stroke-width="1.3"/><circle cx="10" cy="12" r="4.200" fill="#2f7fd0"/></svg><svg class="abs" style="left:42px;top:64.5px" width="9" height="8.5" viewBox="0 0 18 17"><rect x="1.500" y="1.500" width="15" height="14" fill="#fff" stroke="#555" stroke-width="1.250"/><path d="M1.500 6h15M9 6v9.500M1.500 11h15" stroke="#555" stroke-width="1.300"/></svg><svg class="abs" style="left:54px;top:41px" width="8.5" height="8.5" viewBox="0 0 17 17"><rect x="1.200" y="1.200" width="14.600" height="14.600" fill="#fff" stroke="#555" stroke-width="1.250"/><path d="M1.200 6h14.600M1.200 11h14.600M6 1.200v14.600M11 1.200v14.600" stroke="#555" stroke-width="1.100"/><rect x="6.500" y="6.500" width="4" height="4" fill="#3a86d0"/><rect x="11.5" y="11.500" width="4" height="4" fill="#3a86d0"/><rect x="6.500" y="11.500" width="4" height="4" fill="#6db36d"/></svg><svg class="abs" style="left:64.3px;top:44.5px" width="3.400" height="2.200" viewBox="0 0 3.400 2.200"><path d="M0 0h3.400L1.700 2.200z" fill="#666"/></svg><svg class="abs" style="left:54.5px;top:53px" width="7" height="8.5" viewBox="0 0 14 17"><path d="M1.5 1h7l4 4v11h-11z" fill="#fff" stroke="#4a4a4a" stroke-width="1.5"/><path d="M8.5 1v4h4" fill="none" stroke="#4a4a4a" stroke-width="1.3"/><circle cx="9.500" cy="11.500" r="3.600" fill="#fff" stroke="#4a8ac0" stroke-width="1.300"/><path d="M9.500 9.500v2.200h1.800" stroke="#4a8ac0" stroke-width="1" fill="none"/></svg><svg class="abs" style="left:54.5px;top:64.5px" width="7" height="8.5" viewBox="0 0 14 17"><path d="M1.5 1h7l4 4v11h-11z" fill="#fff" stroke="#4a4a4a" stroke-width="1.5"/><path d="M8.5 1v4h4" fill="none" stroke="#4a4a4a" stroke-width="1.3"/><rect x="6.500" y="9" width="6.500" height="7" fill="#f2994a" stroke="#e07a20" stroke-width="1"/></svg><div class="t gl" style="left:8.6px;top:77.1px;letter-spacing:-.09px">Daten abrufen und transf…</div><div class="abs" style="left:76.5px;top:41px;width:1px;height:40px;background:#e8e8e8"></div><svg class="abs" style="left:96.5px;top:41px" width="14.5" height="15" viewBox="0 0 29 30"><path d="M2 4h3v20h-3z" fill="#bbb" stroke="#8a8a8a" stroke-width="1"/><path d="M5 1.500h11l7 7v17.500h-18z" fill="#fff" stroke="#585858" stroke-width="1.250"/><path d="M16 1.500v7h7" fill="none" stroke="#585858" stroke-width="1.300"/><circle cx="20" cy="20" r="7.500" fill="#fff"/><path d="M14 19a6 6 0 0 1 10.500-3.500M26 21a6 6 0 0 1-10.500 3.500" fill="none" stroke="#4ca56a" stroke-width="1.800"/><path d="M25.500 11.500v4.500h-4.500M14.500 28.500v-4.500h4.500" fill="none" stroke="#4ca56a" stroke-width="1.600"/></svg><div class="t rl" style="left:62.5px;width:80px;top:59.1px;">Alle</div><div class="t rl" style="left:59.8px;width:80px;top:66.4px;">aktualisieren</div><svg class="abs" style="left:116.6px;top:68.6px" width="3.400" height="2.200" viewBox="0 0 3.400 2.200"><path d="M0 0h3.400L1.700 2.200z" fill="#666"/></svg><svg class="abs" style="left:124px;top:41.5px" width="8.5" height="7.5" viewBox="0 0 17 15"><rect x="1.200" y="1.500" width="14.600" height="12" fill="#fff" stroke="#2f4f6f" stroke-width="1.800"/><path d="M1.200 4.500h14.600" stroke="#2f4f6f" stroke-width="1.600"/><path d="M11.500 4.500v9" stroke="#2f4f6f" stroke-width="1.200"/></svg><svg class="abs" style="left:125px;top:52.5px" width="6.5" height="8.5" viewBox="0 0 13 17"><rect x="1.200" y="1.200" width="10.600" height="14.600" fill="#fff" stroke="#b0b0b0" stroke-width="1.250"/><path d="M3.500 6h4M3.500 9h4M3.500 12h2" stroke="#b8b8b8" stroke-width="1.200"/></svg><svg class="abs" style="left:125px;top:65px" width="6.5" height="8.5" viewBox="0 0 14 17"><path d="M1.5 1h7l4 4v11h-11z" fill="#fff" stroke="#b4b4b4" stroke-width="1.5"/><path d="M8.5 1v4h4" fill="none" stroke="#b4b4b4" stroke-width="1.3"/></svg><div class="t gl" style="left:79px;top:77.1px;letter-spacing:-.06px">Abfragen und Verbind…</div><div class="abs" style="left:138.7px;top:41px;width:1px;height:40px;background:#e8e8e8"></div></div><div class="abs" style="left:0px;top:0;width:0;height:0"><div class="abs" style="left:143.500px;top:42.500px;width:81.5px;height:27.500px;border:1px solid #e4e4e4;border-radius:2.500px;background:#fff"></div><svg class="abs" style="left:155.5px;top:47px" width="14" height="11.5" viewBox="0 0 28 23"><path d="M14 1.500L2.500 7.500h23z" fill="#fff" stroke="#505050" stroke-width="1.150" stroke-linejoin="round"/><path d="M5.500 10v8M10 10v8M14 10v8M18 10v8M22.500 10v8" stroke="#505050" stroke-width="1.150"/><path d="M3.500 18.500h21M2 21.500h24M4 10h20" stroke="#505050" stroke-width="1.150"/></svg><div class="t rl" style="left:122.30000000000001px;width:80px;top:62.7px;">Aktien</div><svg class="abs" style="left:192px;top:48.5px" width="15" height="11.5" viewBox="0 0 30 23"><rect x="1.500" y="1.500" width="24" height="14" fill="#fff" stroke="#444" stroke-width="1.600"/><circle cx="13.500" cy="8.500" r="4.200" fill="#fff" stroke="#444" stroke-width="1.400"/><path d="M4 4.500a3 3 0 0 0 2.500-2.500M4 12.500a3 3 0 0 1 2.500 2.500M23 4.500a3 3 0 0 1-2.500-2.500" fill="none" stroke="#444" stroke-width="1"/><path d="M18 12v8c0 1.500 2.500 2.500 5.500 2.500s5.500-1 5.500-2.500v-8" fill="#e6e6e6" stroke="#444" stroke-width="1.300"/><ellipse cx="23.500" cy="12" rx="5.500" ry="2.300" fill="#f4f4f4" stroke="#444" stroke-width="1.300"/><path d="M18 16c0 1.500 2.500 2.300 5.500 2.300s5.500-.800 5.500-2.300" fill="none" stroke="#444" stroke-width="1.100"/></svg><div class="t rl" style="left:158.7px;width:80px;top:62.7px;">Währungen</div><div class="t rl" style="left:144.3px;width:80px;top:77.1px;font-size:5.500px;color:#444">Datentypen</div><div class="abs" style="left:217.500px;top:43.500px;width:1px;height:25.500px;background:#e8e8e8"></div><svg class="abs" style="left:219.5px;top:45.5px" width="4" height="2.5" viewBox="0 0 4 2.500"><path d="M.3 2.200L2 .5 3.700 2.200" fill="none" stroke="#c4c4c4" stroke-width=".700"/></svg><svg class="abs" style="left:219.5px;top:55px" width="4" height="2.5" viewBox="0 0 4 2.500"><path d="M0 0h4L2 2.500z" fill="#555"/></svg><svg class="abs" style="left:219.5px;top:63px" width="4" height="4" viewBox="0 0 4 4"><path d="M0 0h4M.2 1.300L2 3.300 3.800 1.300" fill="none" stroke="#555" stroke-width=".700"/></svg><div class="abs" style="left:228.5px;top:41px;width:1px;height:40px;background:#e8e8e8"></div></div><div class="t" style="left:236px;top:43.3px;font-size:5.400px;font-weight:bold;color:#2f7fd0;line-height:1">A</div><div class="t" style="left:236px;top:47.5px;font-size:5.400px;font-weight:bold;color:#444;line-height:1">Z</div><svg class="abs" style="left:240.5px;top:43.3px" width="4" height="9" viewBox="0 0 8 18"><path d="M4 0.500v15M1 12l3 4 3-4" fill="none" stroke="#444" stroke-width="1.400"/></svg><div class="t" style="left:236px;top:58.3px;font-size:5.400px;font-weight:bold;color:#2f7fd0;line-height:1">Z</div><div class="t" style="left:236px;top:62.5px;font-size:5.400px;font-weight:bold;color:#444;line-height:1">A</div><svg class="abs" style="left:240.5px;top:58.3px" width="4" height="9" viewBox="0 0 8 18"><path d="M4 0.500v15M1 12l3 4 3-4" fill="none" stroke="#444" stroke-width="1.400"/></svg><svg class="abs" style="left:251px;top:41px" width="14" height="13" viewBox="0 0 28 26"><rect x="1" y="1" width="26" height="24" fill="#fff" stroke="#555" stroke-width="1.600"/><path d="M1.500 3.500h25" stroke="#c8c8c8" stroke-width="3.500"/><path d="M14 4v21" stroke="#555" stroke-width="1.400"/><rect x="15.500" y="6.500" width="10" height="8.500" fill="#d6e8f8"/><rect x="2.500" y="15.500" width="10.500" height="8.500" fill="#d6e8f8"/><text x="7.500" y="14" font-size="8.500" font-weight="bold" text-anchor="middle" fill="#444" font-family="Liberation Sans,sans-serif">Z</text><text x="20.500" y="14" font-size="8.500" font-weight="bold" text-anchor="middle" fill="#2f7fd0" font-family="Liberation Sans,sans-serif">A</text><text x="7.500" y="23.500" font-size="8.500" font-weight="bold" text-anchor="middle" fill="#2f7fd0" font-family="Liberation Sans,sans-serif">A</text><text x="20.500" y="23.500" font-size="8.500" font-weight="bold" text-anchor="middle" fill="#444" font-family="Liberation Sans,sans-serif">Z</text></svg><div class="t rl" style="left:218px;width:80px;top:58.3px;">Sortieren</div><div class="abs" style="left:273.7px;top:42px;width:1px;height:27.5px;background:#e6e6e6"></div><svg class="abs" style="left:279px;top:41px" width="14.5" height="13.5" viewBox="0 0 29 27"><path d="M1.500 1.500h26l-9.500 11v12h-7v-12z" fill="#fff" stroke="#444" stroke-width="1.700" stroke-linejoin="round"/></svg><div class="t rl" style="left:246.3px;width:80px;top:58.3px;">Filtern</div><svg class="abs" style="left:299px;top:40px" width="8.5" height="8" viewBox="0 0 17 16"><path d="M1 1.500h13l-5 5.500v6h-3v-6z" fill="#fff" stroke="#bdbdbd" stroke-width="1.400" stroke-linejoin="round"/><path d="M10 10l5 5M15 10l-5 5" stroke="#c8c8c8" stroke-width="1.300"/></svg><svg class="abs" style="left:299px;top:52px" width="8.5" height="8" viewBox="0 0 17 16"><path d="M1 1.500h13l-5 5.500v6h-3v-6z" fill="#fff" stroke="#bdbdbd" stroke-width="1.400" stroke-linejoin="round"/><path d="M11 9a3 3 0 1 1-1 4" fill="none" stroke="#c8c8c8" stroke-width="1.300"/></svg><svg class="abs" style="left:299px;top:64.5px" width="8.5" height="8" viewBox="0 0 17 16"><path d="M1 1.500h13l-5 5.500v6h-3v-6z" fill="#fff" stroke="#3a3a3a" stroke-width="1.400" stroke-linejoin="round"/><rect x="9.500" y="8.500" width="6.500" height="7" fill="#3a86d0"/></svg><div class="t rl" style="left:231px;width:80px;top:77.1px;font-size:5.500px;color:#444">Sortieren und Filtern</div><div class="abs" style="left:312.5px;top:41px;width:1px;height:40px;background:#e8e8e8"></div><svg class="abs" style="left:325px;top:40px" width="12.5" height="14.5" viewBox="0 0 25 29"><rect x="1.500" y="1.500" width="15" height="24" fill="#fff" stroke="#3a86d0" stroke-width="1.600"/><rect x="1.500" y="1.500" width="15" height="7" fill="#3a86d0"/><rect x="1.500" y="13" width="15" height="6" fill="#7db5e8"/><path d="M1.500 19h15" stroke="#3a86d0" stroke-width="1.200"/><path d="M13 16l10 10M23 16l-10 10" stroke="#e04a3a" stroke-width="1.800"/></svg><div class="t rl" style="left:289.5px;width:80px;top:57.8px;">Datentools</div><svg class="abs" style="left:327.8px;top:66.5px" width="3.400" height="2.200" viewBox="0 0 3.400 2.200"><path d="M0 0h3.400L1.700 2.200z" fill="#777"/></svg><div class="abs" style="left:347px;top:41px;width:1px;height:40px;background:#e8e8e8"></div><svg class="abs" style="left:356px;top:41px" width="15" height="13.5" viewBox="0 0 30 27"><rect x="1.500" y="1.500" width="24" height="18" fill="#fff" stroke="#707070" stroke-width="1.150"/><path d="M1.500 7.500h24M1.500 13.500h24M9.500 1.500v18M17.500 1.500v18" stroke="#7a7a7a" stroke-width="1"/><rect x="2" y="2" width="7" height="5.500" fill="#3a86d0"/><rect x="10" y="8" width="7" height="5.500" fill="#3a86d0"/><rect x="2" y="8" width="7" height="5.500" fill="#7db5e8"/><rect x="10" y="2" width="7" height="5.500" fill="#7db5e8"/><circle cx="23" cy="18" r="6" fill="#fff"/><path d="M19.500 16a3.600 3.600 0 1 1 5 3.500v2.500" fill="none" stroke="#3a9a8a" stroke-width="1.800"/><circle cx="24.500" cy="25" r="1.200" fill="#3a9a8a"/></svg><div class="t rl" style="left:323px;width:80px;top:57.8px;">Prognose</div><svg class="abs" style="left:361.3px;top:66.5px" width="3.400" height="2.200" viewBox="0 0 3.400 2.200"><path d="M0 0h3.400L1.700 2.200z" fill="#777"/></svg><div class="abs" style="left:379.3px;top:41px;width:1px;height:40px;background:#e8e8e8"></div><svg class="abs" style="left:390.5px;top:40px" width="12.5" height="14" viewBox="0 0 25 28"><rect x="9.500" y="1.500" width="13" height="25" fill="#fff" stroke="#707070" stroke-width="1.150"/><path d="M9.500 7.500h13M9.500 14h13M9.500 20.500h13" stroke="#7a7a7a" stroke-width="1"/><rect x="1.500" y="11" width="6.500" height="6.500" fill="#fff" stroke="#7a7a7a" stroke-width="1"/><path d="M3 14.200h3.500M4.700 12.500v3.500M4.700 5v6M4.700 17.500v6M4.700 5h4.500M4.700 23.500h4.500" stroke="#707070" stroke-width=".9"/></svg><div class="t rl" style="left:357px;width:80px;top:57.8px;">Gliederung</div><svg class="abs" style="left:395.3px;top:66.5px" width="3.400" height="2.200" viewBox="0 0 3.400 2.200"><path d="M0 0h3.400L1.700 2.200z" fill="#777"/></svg><svg class="abs" style="left:419.5px;top:75.5px" width="6" height="4" viewBox="0 0 6 4"><path d="M.5 .700L3 3.200 5.500 .700" fill="none" stroke="#444" stroke-width=".800"/></svg>
<div class="abs" style="left:0;top:83.8px;width:100%;height:19.5px;background:#e6e6e6"></div><div class="fb" style="left:4.3px;width:61px"></div>
<div class="t" style="left:7.3px;top:91.6px;font-size:6.2px;letter-spacing:-.42px;color:#2a2a2a">A1</div>
<svg class="abs" style="left:58.3px;top:92.5px" width="5" height="4" viewBox="0 0 5 4"><path d="M0.5 0.8L2.5 3 4.5 0.8" fill="none" stroke="#555" stroke-width=".8"/></svg>
<div class="abs" style="left:70.3px;top:91.5px;width:1px;height:5px;border-left:1px dotted #888"></div>
<div class="fb" style="left:76px;width:34.5px"></div>
<svg class="abs" style="left:78px;top:90.5px" width="30" height="8" viewBox="0 0 30 8"><path d="M1.5 1.5l4 5M5.5 1.5l-4 5" stroke="#c8c8c8" stroke-width=".8" fill="none"/><path d="M10 4.5l2 2 4-5" stroke="#c8c8c8" stroke-width=".8" fill="none"/></svg>
<div class="t" style="left:101.6px;top:89.6px;font-size:9px;font-family:'Liberation Serif',serif;font-style:italic;color:#444;letter-spacing:-.3px">fx</div>
<div class="fb" style="left:112.5px;width:317px"></div>
<div class="grid" style="left:1px;top:103.3px;width:431px;height:238.0px"></div><div class="abs" style="left:1px;top:103.3px;width:33px;height:238.0px;background:#f0f0f0"></div><div class="abs" style="left:1.6px;top:103.1px;width:10.2px;height:10.4px;background:#ececec;border:1px solid #c4c4c4;font-size:5.6px;line-height:8.6px;text-align:center;color:#8a8a8a">1</div><div class="abs" style="left:11.6px;top:103.1px;width:10.2px;height:10.4px;background:#ececec;border:1px solid #c4c4c4;font-size:5.6px;line-height:8.6px;text-align:center;color:#8a8a8a">2</div><div class="abs" style="left:21.6px;top:103.1px;width:10.2px;height:10.4px;background:#ececec;border:1px solid #c4c4c4;font-size:5.6px;line-height:8.6px;text-align:center;color:#8a8a8a">3</div><div class="ch" style="left:34px;top:103.3px;width:14px;height:10.5px"></div><svg class="abs" style="left:39.7px;top:105.6px" width="7.5" height="7" viewBox="0 0 7.5 7"><path d="M7.2 0.3v6.400h-7z" fill="#bcbcbc"/></svg><div class="ch" style="left:48px;top:103.3px;width:44.7px;height:10.5px;line-height:11px;background:#d5d5d5;color:#3f7a58;border-bottom:1.2px solid #6a9a7c">A</div><div class="vl" style="left:91.7px;top:113.8px;height:227.5px"></div><div class="ch" style="left:92.7px;top:103.3px;width:95.60000000000001px;height:10.5px;line-height:11px">B</div><div class="vl" style="left:187.3px;top:113.8px;height:227.5px"></div><div class="ch" style="left:188.3px;top:103.3px;width:56.89999999999998px;height:10.5px;line-height:11px">C</div><div class="vl" style="left:244.2px;top:113.8px;height:227.5px"></div><div class="ch" style="left:245.2px;top:103.3px;width:56.30000000000001px;height:10.5px;line-height:11px">D</div><div class="vl" style="left:300.5px;top:113.8px;height:227.5px"></div><div class="ch" style="left:301.5px;top:103.3px;width:44.5px;height:10.5px;line-height:11px">E</div><div class="vl" style="left:345px;top:113.8px;height:227.5px"></div><div class="ch" style="left:346px;top:103.3px;width:42.5px;height:10.5px;line-height:11px">F</div><div class="vl" style="left:387.5px;top:113.8px;height:227.5px"></div><div class="ch" style="left:388.5px;top:103.3px;width:34.5px;height:10.5px;line-height:11px">G</div><div class="ch" style="left:423px;top:103.3px;width:9px;height:238.0px;background:#f0f0f0;border:none"></div><div class="abs" style="left:4.4px;top:125.14999999999999px;width:3px;height:216.15px;border-left:1px solid #999;border-top:1px solid #999"></div><div class="rh" style="left:34px;top:113.80px;width:14px;height:10.85px;background:#d4d4d4;color:#2f6d4a;border-right:1.2px solid #6a9a7c">1</div><div class="hl" style="left:48px;top:123.65px;width:375px"></div><div class="c b" style="left:50.5px;top:113.80px">ID</div><div class="c b" style="left:94.7px;top:113.80px">Datum</div><div class="c b" style="left:190.5px;top:113.80px">Std</div><div class="c b" style="left:247px;top:113.80px">Zuständig</div><div class="rh" style="left:34px;top:124.65px;width:14px;height:10.85px">3</div><div class="hl" style="left:48px;top:134.50px;width:375px"></div><div class="abs pb" style="left:11.3px;top:124.65px;height:10.85px"><svg width="3.400" height="3.400" viewBox="0 0 3.400 3.400"><path d="M1.700 0v3.400M0 1.700h3.400" stroke="#505050" stroke-width=".85"/></svg></div><div class="c b cc bb" style="left:92.7px;width:95.6px;top:124.65px">02.06.2023 Ergebnis</div><div class="c cc" style="left:188.3px;width:56.9px;top:124.65px">4:21</div><div class="rh" style="left:34px;top:135.50px;width:14px;height:10.85px">6</div><div class="hl" style="left:48px;top:145.35px;width:375px"></div><div class="abs pb" style="left:11.3px;top:135.50px;height:10.85px"><svg width="3.400" height="3.400" viewBox="0 0 3.400 3.400"><path d="M1.700 0v3.400M0 1.700h3.400" stroke="#505050" stroke-width=".85"/></svg></div><div class="c b cc bb" style="left:92.7px;width:95.6px;top:135.50px">03.06.2023 Ergebnis</div><div class="c cc" style="left:188.3px;width:56.9px;top:135.50px">5:33</div><div class="rh" style="left:34px;top:146.35px;width:14px;height:10.85px">8</div><div class="hl" style="left:48px;top:156.20px;width:375px"></div><div class="abs pb" style="left:11.3px;top:146.35px;height:10.85px"><svg width="3.400" height="3.400" viewBox="0 0 3.400 3.400"><path d="M1.700 0v3.400M0 1.700h3.400" stroke="#505050" stroke-width=".85"/></svg></div><div class="c b cc bb" style="left:92.7px;width:95.6px;top:146.35px">05.06.2023 Ergebnis</div><div class="c cc" style="left:188.3px;width:56.9px;top:146.35px">3:19</div><div class="rh" style="left:34px;top:157.20px;width:14px;height:10.85px">11</div><div class="hl" style="left:48px;top:167.05px;width:375px"></div><div class="abs pb" style="left:11.3px;top:157.20px;height:10.85px"><svg width="3.400" height="3.400" viewBox="0 0 3.400 3.400"><path d="M1.700 0v3.400M0 1.700h3.400" stroke="#505050" stroke-width=".85"/></svg></div><div class="c b cc bb" style="left:92.7px;width:95.6px;top:157.20px">07.06.2023 Ergebnis</div><div class="c cc" style="left:188.3px;width:56.9px;top:157.20px">6:40</div><div class="rh" style="left:34px;top:168.05px;width:14px;height:10.85px">13</div><div class="hl" style="left:48px;top:177.90px;width:375px"></div><div class="abs pb" style="left:11.3px;top:168.05px;height:10.85px"><svg width="3.400" height="3.400" viewBox="0 0 3.400 3.400"><path d="M1.700 0v3.400M0 1.700h3.400" stroke="#505050" stroke-width=".85"/></svg></div><div class="c b cc bb" style="left:92.7px;width:95.6px;top:168.05px">09.06.2023 Ergebnis</div><div class="c cc" style="left:188.3px;width:56.9px;top:168.05px">2:30</div><div class="rh" style="left:34px;top:178.90px;width:14px;height:10.85px">16</div><div class="hl" style="left:48px;top:188.75px;width:375px"></div><div class="abs pb" style="left:11.3px;top:178.90px;height:10.85px"><svg width="3.400" height="3.400" viewBox="0 0 3.400 3.400"><path d="M1.700 0v3.400M0 1.700h3.400" stroke="#505050" stroke-width=".85"/></svg></div><div class="c b cc bb" style="left:92.7px;width:95.6px;top:178.90px">12.06.2023 Ergebnis</div><div class="c cc" style="left:188.3px;width:56.9px;top:178.90px">9:03</div><div class="rh" style="left:34px;top:189.75px;width:14px;height:10.85px">18</div><div class="hl" style="left:48px;top:199.60px;width:375px"></div><div class="abs pb" style="left:11.3px;top:189.75px;height:10.85px"><svg width="3.400" height="3.400" viewBox="0 0 3.400 3.400"><path d="M1.700 0v3.400M0 1.700h3.400" stroke="#505050" stroke-width=".85"/></svg></div><div class="c b cc bb" style="left:92.7px;width:95.6px;top:189.75px">13.06.2023 Ergebnis</div><div class="c cc" style="left:188.3px;width:56.9px;top:189.75px">1:45</div><div class="rh" style="left:34px;top:200.60px;width:14px;height:10.85px">21</div><div class="hl" style="left:48px;top:210.45px;width:375px"></div><div class="abs pb" style="left:11.3px;top:200.60px;height:10.85px"><svg width="3.400" height="3.400" viewBox="0 0 3.400 3.400"><path d="M1.700 0v3.400M0 1.700h3.400" stroke="#505050" stroke-width=".85"/></svg></div><div class="c b cc bb" style="left:92.7px;width:95.6px;top:200.60px">14.06.2023 Ergebnis</div><div class="c cc" style="left:188.3px;width:56.9px;top:200.60px">10:17</div><div class="rh" style="left:34px;top:211.45px;width:14px;height:10.85px">24</div><div class="hl" style="left:48px;top:221.30px;width:375px"></div><div class="abs pb" style="left:11.3px;top:211.45px;height:10.85px"><svg width="3.400" height="3.400" viewBox="0 0 3.400 3.400"><path d="M1.700 0v3.400M0 1.700h3.400" stroke="#505050" stroke-width=".85"/></svg></div><div class="c b cc bb" style="left:92.7px;width:95.6px;top:211.45px">15.06.2023 Ergebnis</div><div class="c cc" style="left:188.3px;width:56.9px;top:211.45px">7:46</div><div class="rh" style="left:34px;top:222.30px;width:14px;height:10.85px">27</div><div class="hl" style="left:48px;top:232.15px;width:375px"></div><div class="abs pb" style="left:11.3px;top:222.30px;height:10.85px"><svg width="3.400" height="3.400" viewBox="0 0 3.400 3.400"><path d="M1.700 0v3.400M0 1.700h3.400" stroke="#505050" stroke-width=".85"/></svg></div><div class="c b cc bb" style="left:92.7px;width:95.6px;top:222.30px">16.06.2023 Ergebnis</div><div class="c cc" style="left:188.3px;width:56.9px;top:222.30px">7:39</div><div class="rh" style="left:34px;top:233.15px;width:14px;height:10.85px">30</div><div class="hl" style="left:48px;top:243.00px;width:375px"></div><div class="abs pb" style="left:11.3px;top:233.15px;height:10.85px"><svg width="3.400" height="3.400" viewBox="0 0 3.400 3.400"><path d="M1.700 0v3.400M0 1.700h3.400" stroke="#505050" stroke-width=".85"/></svg></div><div class="c b cc bb" style="left:92.7px;width:95.6px;top:233.15px">17.06.2023 Ergebnis</div><div class="c cc" style="left:188.3px;width:56.9px;top:233.15px">5:34</div><div class="rh" style="left:34px;top:244.00px;width:14px;height:10.85px">32</div><div class="hl" style="left:48px;top:253.85px;width:375px"></div><div class="abs pb" style="left:11.3px;top:244.00px;height:10.85px"><svg width="3.400" height="3.400" viewBox="0 0 3.400 3.400"><path d="M1.700 0v3.400M0 1.700h3.400" stroke="#505050" stroke-width=".85"/></svg></div><div class="c b cc bb" style="left:92.7px;width:95.6px;top:244.00px">18.06.2023 Ergebnis</div><div class="c cc" style="left:188.3px;width:56.9px;top:244.00px">2:58</div><div class="rh" style="left:34px;top:254.85px;width:14px;height:10.85px">36</div><div class="hl" style="left:48px;top:264.70px;width:375px"></div><div class="abs pb" style="left:11.3px;top:254.85px;height:10.85px"><svg width="3.400" height="3.400" viewBox="0 0 3.400 3.400"><path d="M1.700 0v3.400M0 1.700h3.400" stroke="#505050" stroke-width=".85"/></svg></div><div class="c b cc bb" style="left:92.7px;width:95.6px;top:254.85px">19.06.2023 Ergebnis</div><div class="c cc" style="left:188.3px;width:56.9px;top:254.85px">11:13</div><div class="rh" style="left:34px;top:265.70px;width:14px;height:10.85px">38</div><div class="hl" style="left:48px;top:275.55px;width:375px"></div><div class="abs pb" style="left:11.3px;top:265.70px;height:10.85px"><svg width="3.400" height="3.400" viewBox="0 0 3.400 3.400"><path d="M1.700 0v3.400M0 1.700h3.400" stroke="#505050" stroke-width=".85"/></svg></div><div class="c b cc bb" style="left:92.7px;width:95.6px;top:265.70px">20.06.2023 Ergebnis</div><div class="c cc" style="left:188.3px;width:56.9px;top:265.70px">4:02</div><div class="rh" style="left:34px;top:276.55px;width:14px;height:10.85px">40</div><div class="hl" style="left:48px;top:286.40px;width:375px"></div><div class="abs pb" style="left:11.3px;top:276.55px;height:10.85px"><svg width="3.400" height="3.400" viewBox="0 0 3.400 3.400"><path d="M1.700 0v3.400M0 1.700h3.400" stroke="#505050" stroke-width=".85"/></svg></div><div class="c b cc bb" style="left:92.7px;width:95.6px;top:276.55px">21.06.2023 Ergebnis</div><div class="c cc" style="left:188.3px;width:56.9px;top:276.55px">1:45</div><div class="rh" style="left:34px;top:287.40px;width:14px;height:10.85px">44</div><div class="hl" style="left:48px;top:297.25px;width:375px"></div><div class="abs pb" style="left:11.3px;top:287.40px;height:10.85px"><svg width="3.400" height="3.400" viewBox="0 0 3.400 3.400"><path d="M1.700 0v3.400M0 1.700h3.400" stroke="#505050" stroke-width=".85"/></svg></div><div class="c b cc bb" style="left:92.7px;width:95.6px;top:287.40px">23.06.2023 Ergebnis</div><div class="c cc" style="left:188.3px;width:56.9px;top:287.40px">13:52</div><div class="rh" style="left:34px;top:298.25px;width:14px;height:10.85px">46</div><div class="hl" style="left:48px;top:308.10px;width:375px"></div><div class="abs pb" style="left:11.3px;top:298.25px;height:10.85px"><svg width="3.400" height="3.400" viewBox="0 0 3.400 3.400"><path d="M1.700 0v3.400M0 1.700h3.400" stroke="#505050" stroke-width=".85"/></svg></div><div class="c b cc bb" style="left:92.7px;width:95.6px;top:298.25px">24.06.2023 Ergebnis</div><div class="c cc" style="left:188.3px;width:56.9px;top:298.25px">4:11</div><div class="rh" style="left:34px;top:309.10px;width:14px;height:10.85px">49</div><div class="hl" style="left:48px;top:318.95px;width:375px"></div><div class="abs pb" style="left:11.3px;top:309.10px;height:10.85px"><svg width="3.400" height="3.400" viewBox="0 0 3.400 3.400"><path d="M1.700 0v3.400M0 1.700h3.400" stroke="#505050" stroke-width=".85"/></svg></div><div class="c b cc bb" style="left:92.7px;width:95.6px;top:309.10px">25.06.2023 Ergebnis</div><div class="c cc" style="left:188.3px;width:56.9px;top:309.10px">7:39</div><div class="rh" style="left:34px;top:319.95px;width:14px;height:10.85px">52</div><div class="hl" style="left:48px;top:329.80px;width:375px"></div><div class="abs pb" style="left:11.3px;top:319.95px;height:10.85px"><svg width="3.400" height="3.400" viewBox="0 0 3.400 3.400"><path d="M1.700 0v3.400M0 1.700h3.400" stroke="#505050" stroke-width=".85"/></svg></div><div class="c b cc bb" style="left:92.7px;width:95.6px;top:319.95px">26.06.2023 Ergebnis</div><div class="c cc" style="left:188.3px;width:56.9px;top:319.95px">5:34</div><div class="rh" style="left:34px;top:330.80px;width:14px;height:10.85px">54</div><div class="hl" style="left:48px;top:340.65px;width:375px"></div><div class="abs pb" style="left:11.3px;top:330.80px;height:10.85px"><svg width="3.400" height="3.400" viewBox="0 0 3.400 3.400"><path d="M1.700 0v3.400M0 1.700h3.400" stroke="#505050" stroke-width=".85"/></svg></div><div class="c b cc bb" style="left:92.7px;width:95.6px;top:330.80px">27.06.2023 Ergebnis</div><div class="c cc" style="left:188.3px;width:56.9px;top:330.80px">2:58</div><div class="abs" style="left:47.5px;top:113.5px;width:45.7px;height:11.45px;border:1px solid #1e7145"></div><div class="abs" style="left:91.6px;top:123.44999999999999px;width:2.6px;height:2.6px;background:#1e7145;border:.5px solid #fff"></div><svg class="abs" style="left:426px;top:106.1px" width="4" height="3.200" viewBox="0 0 5 4"><path d="M2.500 .3L4.800 3.700H.200z" fill="#666"/></svg><div class="abs" style="left:425.8px;top:111.5px;width:3.8px;height:98.500px;border-radius:2px;background:#72727a"></div><svg class="abs" style="left:426px;top:335.7px" width="4" height="3.200" viewBox="0 0 5 4"><path d="M2.500 3.700L4.800 .3H.200z" fill="#666"/></svg>
<div class="abs" style="left:1px;top:341px;width:431.5px;height:16.5px;background:#e7e7e7"></div><svg class="abs" style="left:11.8px;top:346.5px" width="22" height="6" viewBox="0 0 22 6"><path d="M3 .8L.8 3 3 5.2M17.5 .8L19.7 3 17.5 5.2" fill="none" stroke="#a8a8a8" stroke-width=".8"/></svg><div class="abs" style="left:53.8px;top:341px;width:31px;height:14px;background:#fff;border-radius:0 0 2px 2px"></div><div class="t sheet b" style="left:57.8px;color:#1d2a22;font-size:6.4px;letter-spacing:-.16px">Tabelle1</div><div class="abs" style="left:57.8px;top:352.2px;width:23.5px;height:1.1px;background:#177a45"></div><div class="t sheet" style="left:93.8px">Tabelle3</div><svg class="abs" style="left:143.3px;top:346px" width="7" height="7" viewBox="0 0 7 7"><path d="M3.5 .8v5.400M.8 3.5h5.400" stroke="#7a7a7a" stroke-width=".8"/></svg>
<div class="abs" style="left:256px;top:341.500px;width:177px;height:16px;background:#ebebeb"></div><svg class="abs" style="left:260px;top:345px" width="2" height="7" viewBox="0 0 2 7"><circle cx="1" cy="1" r=".6" fill="#888"/><circle cx="1" cy="3.500" r=".6" fill="#888"/><circle cx="1" cy="6" r=".6" fill="#888"/></svg><svg class="abs" style="left:271px;top:346.800px" width="3" height="3.900" viewBox="0 0 3.500 4.500"><path d="M3.300 .2v4.100L.2 2.250z" fill="#555"/></svg><div class="abs" style="left:277px;top:346.800px;width:79px;height:4.200px;border-radius:2.100px;background:#6e6e6e"></div><svg class="abs" style="left:418.500px;top:346.800px" width="3" height="3.900" viewBox="0 0 3.500 4.500"><path d="M.2 .2v4.100l3.100-2.050z" fill="#555"/></svg>
<div class="abs" style="left:1px;top:357.5px;width:431.5px;height:9px;background:#f7f7f7"></div><div class="t st" style="left:3.5px;letter-spacing:-.04px">Blatt 1 von 2</div><div class="t st" style="left:40.2px">Arbeitsmappenstatistiken</div><svg class="abs" style="left:111px;top:358.8px" width="7" height="7" viewBox="0 0 14 14"><rect x="1" y="1.5" width="12" height="11" rx="1.5" fill="none" stroke="#444" stroke-width="1.4"/><path d="M1 5h12M4 8h2M8 8h2M4 10.5h2" stroke="#444" stroke-width="1.3"/><circle cx="9.5" cy="9.5" r="2.4" fill="#444"/></svg><svg class="abs" style="left:126px;top:358.6px" width="7.5" height="7.5" viewBox="0 0 15 15"><circle cx="7.5" cy="3" r="1.6" fill="#444"/><path d="M2 5.2h11M7.5 5.2v4M7.5 9l-3.2 5M7.5 9l3.2 5" stroke="#444" stroke-width="1.5" fill="none"/></svg><div class="t st" style="left:134.8px">Barrierefreiheit: Untersuchen</div>
<div class="abs" style="left:279.500px;top:357.500px;width:154px;height:9px;background:#ececec"></div><svg class="abs" style="left:217px;top:358.800px" width="7.500" height="7" viewBox="0 0 15 14"><rect x="1" y="1.500" width="12" height="8.500" rx="1" fill="none" stroke="#444" stroke-width="1.400"/><path d="M4 12.500h6" stroke="#444" stroke-width="1.300"/><circle cx="11" cy="9.500" r="2.800" fill="#f3f3f3" stroke="#444" stroke-width="1.200"/></svg><div class="t st" style="left:225.300px">Anzeigeeinstellungen</div><div class="abs" style="left:289.500px;top:358.300px;width:11px;height:7.800px;background:#dadada"></div><svg class="abs" style="left:292.500px;top:359px" width="7" height="6.500" viewBox="0 0 14 13"><rect x="1" y="1" width="12" height="11" fill="none" stroke="#444" stroke-width="1.300"/><path d="M1 4.700h12M1 8.300h12M5 1v11M9 1v11" stroke="#444" stroke-width="1.100"/></svg><svg class="abs" style="left:312px;top:359px" width="6.500" height="6.500" viewBox="0 0 13 13"><rect x="1" y="1" width="11" height="11" fill="none" stroke="#444" stroke-width="1.300"/><rect x="3.500" y="3.500" width="6" height="8.500" fill="none" stroke="#444" stroke-width="1.100"/></svg><svg class="abs" style="left:330px;top:359px" width="7" height="6.500" viewBox="0 0 14 13"><rect x="1" y="1" width="12" height="11" fill="none" stroke="#444" stroke-width="1.300"/><path d="M4.500 1v6h5v-6" fill="none" stroke="#444" stroke-width="1.100"/></svg><div class="abs" style="left:346.500px;top:362px;width:3.500px;height:.8px;background:#444"></div><div class="abs" style="left:352px;top:362px;width:46px;height:.7px;background:#8a8a8a"></div><div class="abs" style="left:376.300px;top:359.300px;width:1.500px;height:6px;background:#444"></div><svg class="abs" style="left:401.500px;top:360px" width="4.500" height="4.500" viewBox="0 0 9 9"><path d="M4.500 .500v8M.500 4.500h8" stroke="#444" stroke-width="1.300"/></svg><div class="t st" style="left:412px">115%</div>
</div>
</body></html>
